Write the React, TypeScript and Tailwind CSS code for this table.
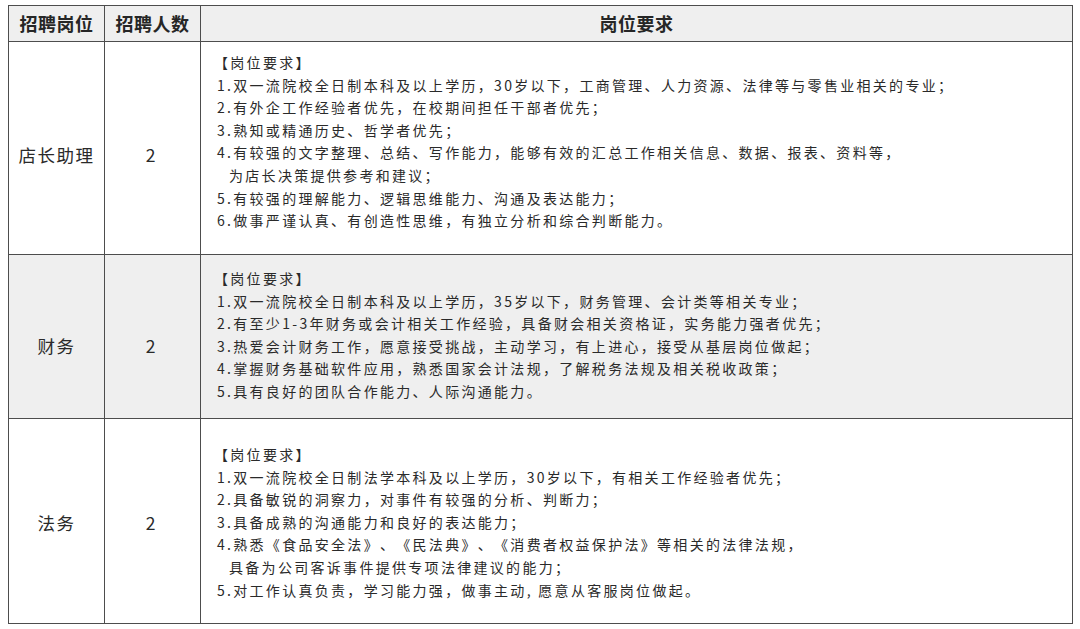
import React from "react";

// Data
const rows = [
  {
    name: "店长助理",
    count: 2,
    shaded: false,
    height: "h-[213px]",
    textPad: "pt-[9px]",
    labelPad: "pt-[15px]",
    lines: [
      "1.双一流院校全日制本科及以上学历，30岁以下，工商管理、人力资源、法律等与零售业相关的专业；",
      "2.有外企工作经验者优先，在校期间担任干部者优先；",
      "3.熟知或精通历史、哲学者优先；",
      "4.有较强的文字整理、总结、写作能力，能够有效的汇总工作相关信息、数据、报表、资料等，",
      " 为店长决策提供参考和建议；",
      "5.有较强的理解能力、逻辑思维能力、沟通及表达能力；",
      "6.做事严谨认真、有创造性思维，有独立分析和综合判断能力。",
    ],
  },
  {
    name: "财务",
    count: 2,
    shaded: true,
    height: "h-[164px]",
    textPad: "pt-[12px]",
    labelPad: "pt-[20px]",
    lines: [
      "1.双一流院校全日制本科及以上学历，35岁以下，财务管理、会计类等相关专业；",
      "2.有至少1-3年财务或会计相关工作经验，具备财会相关资格证，实务能力强者优先；",
      "3.热爱会计财务工作，愿意接受挑战，主动学习，有上进心，接受从基层岗位做起；",
      "4.掌握财务基础软件应用，熟悉国家会计法规，了解税务法规及相关税收政策；",
      "5.具有良好的团队合作能力、人际沟通能力。",
    ],
  },
  {
    name: "法务",
    count: 2,
    shaded: false,
    height: "h-[205px]",
    textPad: "pt-[24px]",
    labelPad: "pt-[5px]",
    lines: [
      "1.双一流院校全日制法学本科及以上学历，30岁以下，有相关工作经验者优先；",
      "2.具备敏锐的洞察力，对事件有较强的分析、判断力；",
      "3.具备成熟的沟通能力和良好的表达能力；",
      "4.熟悉《食品安全法》、《民法典》、《消费者权益保护法》等相关的法律法规，",
      " 具备为公司客诉事件提供专项法律建议的能力；",
      "5.对工作认真负责，学习能力强，做事主动, 愿意从客服岗位做起。",
    ],
  },
];

const cell = "border-[1.5px] border-[#4d4d4d]";

const App = () => {
  return (
    <div
      className="w-[1080px] h-[629px] bg-white pt-[5px] pl-[8px] [text-spacing-trim:space-all]"
      style={{ fontFamily: '"Noto Sans CJK SC", "Noto Sans", sans-serif' }}
    >
      <table className="table-fixed border-collapse w-[1065px] text-[#2a2a2a]">
        <colgroup>
          <col className="w-[96px]" />
          <col className="w-[96px]" />
          <col />
        </colgroup>
        <thead>
          {/* Header */}
          <tr className="h-[36px] bg-[#efefef]">
            <th className={`${cell} text-[18px] font-bold text-[#262626] tracking-[0.5px] p-0`}>招聘岗位</th>
            <th className={`${cell} text-[18px] font-bold text-[#262626] tracking-[0.5px] p-0`}>招聘人数</th>
            <th className={`${cell} text-[18px] font-bold text-[#262626] tracking-[0.5px] p-0`}>岗位要求</th>
          </tr>
        </thead>
        <tbody>
          {rows.map((row) => (
            <tr key={row.name} className={`${row.height} ${row.shaded ? "bg-[#efefef]" : "bg-white"}`}>
              <td className={`${cell} ${row.labelPad} text-center align-middle text-[17.5px] tracking-[1.5px]`}>
                {row.name}
              </td>
              <td className={`${cell} ${row.labelPad} text-center align-middle text-[17.5px] pr-[4px]`}>
                {row.count}
              </td>
              <td className={`${cell} ${row.textPad} align-top pl-[16px]`}>
                <div className="text-[14px] leading-[22.6px] tracking-[2.3px] whitespace-pre">
                  <div className="-ml-[3px]">【岗位要求】</div>
                  {row.lines.map((line, idx) => (
                    <div key={idx} className={line.startsWith(" ") ? "pl-[12px]" : ""}>
                      {line.trim()}
                    </div>
                  ))}
                </div>
              </td>
            </tr>
          ))}
        </tbody>
      </table>
    </div>
  );
};

export default App;
